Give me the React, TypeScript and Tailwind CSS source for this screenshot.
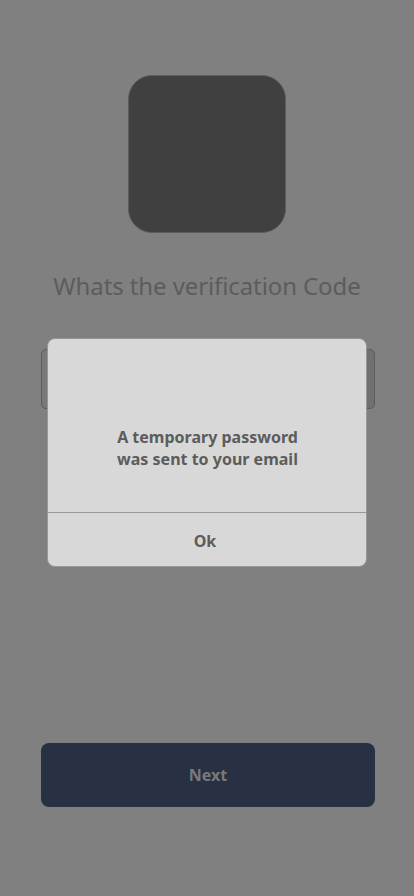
export default function App() {
  return (
    <main className="relative flex h-[896px] w-[414px] flex-col overflow-hidden bg-[#808080] pt-[75px] font-['Noto_Sans',sans-serif] text-[#5c5c5c]">
      <div className="ml-32 size-[158px] shrink-0 rounded-[24px] border border-[#5c5c5c] bg-[#404040]" />
      <h1 className="mt-[35px] h-[37px] whitespace-nowrap text-center text-[24px] leading-9 tracking-[-0.1px]">Whats the verification Code</h1>
      <div className="ml-[41px] mt-11 h-[60px] w-[334px] rounded-[5px] border border-[#5c5c5c] bg-linear-to-r from-[#797979] to-[#707070] to-50%" />
      <button className="ml-[41px] mt-[334px] h-16 w-[334px] rounded-lg bg-[#283044] text-base font-bold text-[#787a7a]">Next</button>
      <section role="dialog" className="absolute left-[47px] top-[338px] flex h-[229px] w-80 flex-col overflow-hidden rounded-lg border border-[#979797] bg-[#d8d8d8] text-center text-base font-bold">
        <p className="h-[173px] pl-px pt-[87px] leading-[22px]">
          A temporary password
          <br />
          was sent to your email
        </p>
        <button className="flex-1 border-t border-[#979797] pr-1 pt-0.5">Ok</button>
      </section>
    </main>
  );
}
